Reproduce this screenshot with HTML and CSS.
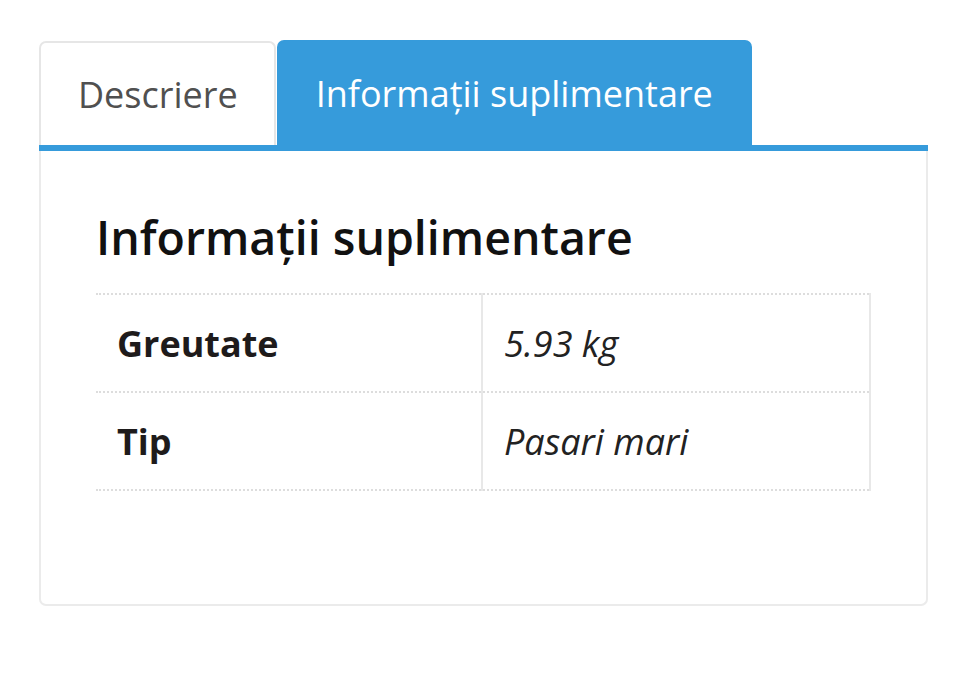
FILE: index.html
```html
<!DOCTYPE html>
<html lang="ro">
<head>
<meta charset="utf-8">
<link rel="stylesheet" href="styles.css">
</head>
<body>
<div class="tabs-wrap">
  <ul class="tabs">
    <li class="tab">Descriere</li>
    <li class="tab active">Informații suplimentare</li>
  </ul>
  <div class="panel">
    <h2 class="panel-title">Informații suplimentare</h2>
    <table class="attrs">
      <tr>
        <th>Greutate</th>
        <td>5.93 kg</td>
      </tr>
      <tr>
        <th>Tip</th>
        <td>Pasari mari</td>
      </tr>
    </table>
  </div>
</div>
</body>
</html>
```
FILE: styles.css
```css
html, body {
  margin: 0;
  padding: 0;
  background: #fff;
}
body {
  font-family: "Open Sans", "Noto Sans", sans-serif;
  padding: 40px 39px 0 39px;
}
.tabs-wrap {
  width: 889px;
}
.tabs {
  list-style: none;
  margin: 0;
  padding: 0;
  display: flex;
  align-items: flex-end;
  border-bottom: 6px solid #369bdb;
}
.tab {
  box-sizing: border-box;
  height: 104px;
  padding: 0 37px 0 37px;
  display: flex;
  align-items: center;
  font-size: 36px;
  color: #505050;
  border: 2px solid #e6e6e6;
  border-bottom: none;
  border-radius: 7px 7px 0 0;
  margin-right: 1px;
}
.tab:first-child {
  padding-right: 36px;
}
.tab.active {
  height: 105px;
  background: #369bdb;
  border-color: #369bdb;
  color: #fff;
}
.panel {
  box-sizing: border-box;
  height: 455px;
  border: 2px solid #ebebeb;
  border-top: none;
  border-radius: 0 0 7px 7px;
  padding: 59px 55px 0 55px;
}
.panel-title {
  margin: 0 0 28px 0;
  font-size: 46.5px;
  font-weight: 600;
  color: #111;
  line-height: 55px;
}
.attrs {
  width: 100%;
  border-collapse: collapse;
  font-size: 36px;
  color: #222;
}
.attrs th, .attrs td {
  height: 98px;
  box-sizing: border-box;
  border-top: 2px dotted #dddddd;
  border-bottom: 2px dotted #dddddd;
  padding: 0 21px;
  text-align: left;
}
.attrs th {
  width: 386px;
  font-weight: 700;
  color: #1e1b1b;
  border-right: 2px solid #e8e8e8;
}
.attrs td {
  font-style: italic;
  border-right: 2px solid #e8e8e8;
}
```
